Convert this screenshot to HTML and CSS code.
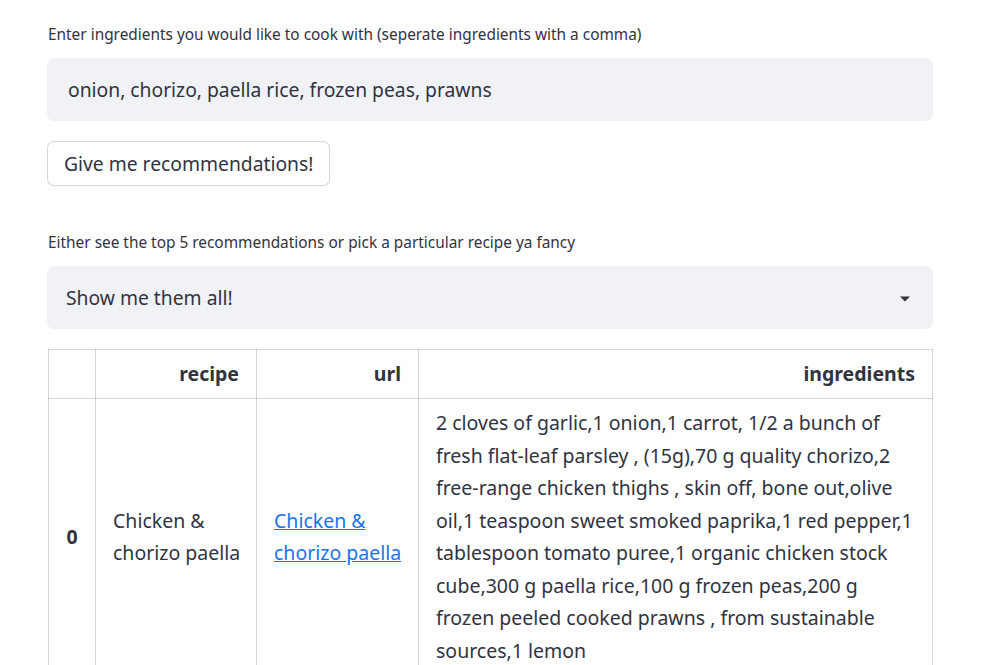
FILE: index.html
```html
<!DOCTYPE html>
<html>
<head>
<meta charset="utf-8">
<link rel="stylesheet" href="styles.css">
</head>
<body>
<main class="app">
  <label class="label">Enter ingredients you would like to cook with (seperate ingredients with a comma)</label>
  <div class="input">onion, chorizo, paella rice, frozen peas, prawns</div>
  <button class="btn">Give me recommendations!</button>
  <label class="label label2">Either see the top 5 recommendations or pick a particular recipe ya fancy</label>
  <div class="select">
    <span>Show me them all!</span>
    <svg class="caret" width="12" height="8" viewBox="0 0 12 8"><path d="M1 1.5h10L6 6.5z" fill="#31333f"/></svg>
  </div>
  <table class="df">
    <colgroup>
      <col class="c0"><col class="c1"><col class="c2"><col class="c3">
    </colgroup>
    <thead>
      <tr><th></th><th>recipe</th><th>url</th><th>ingredients</th></tr>
    </thead>
    <tbody>
      <tr>
        <th class="idx">0</th>
        <td class="nw">Chicken &amp;<br>chorizo paella</td>
        <td class="nw"><a href="#">Chicken &amp;<br>chorizo paella</a></td>
        <td class="nw">2 cloves of garlic,1 onion,1 carrot, 1/2 a bunch of<br>fresh flat-leaf parsley , (15g),70 g quality chorizo,2<br>free-range chicken thighs , skin off, bone out,olive<br>oil,1 teaspoon sweet smoked paprika,1 red pepper,1<br>tablespoon tomato puree,1 organic chicken stock<br>cube,300 g paella rice,100 g frozen peas,200 g<br>frozen peeled cooked prawns , from sustainable<br>sources,1 lemon</td>
      </tr>
    </tbody>
  </table>
</main>
</body>
</html>
```
FILE: styles.css
```css
* { box-sizing: border-box; }
html, body { margin: 0; padding: 0; background: #fff; }
body {
  font-family: "Noto Sans", "Open Sans", sans-serif;
  color: #31333f;
  overflow: hidden;
}
.app {
  width: 886px;
  margin-left: 47px;
  padding-top: 25px;
  display: flex;
  flex-direction: column;
  align-items: flex-start;
}
.label {
  font-size: 15.4px;
  line-height: 20px;
  margin-left: 1px;
  margin-bottom: 13px;
}
.label2 { margin-top: 47px; margin-bottom: 13px; }
.input {
  width: 100%;
  height: 63px;
  background: #f0f2f6;
  border-radius: 7px;
  font-size: 19.3px;
  line-height: 63px;
  padding-left: 21px;
}
.btn {
  margin-top: 20px;
  height: 45px;
  padding: 0 16px;
  width: 283px;
  background: #fff;
  border: 1px solid rgba(49, 51, 63, 0.2);
  border-radius: 7px;
  font-family: inherit;
  font-size: 19.3px;
  color: #31333f;
  text-align: left;
  white-space: nowrap;
}
.select {
  width: 100%;
  height: 63px;
  background: #f0f2f6;
  border-radius: 7px;
  font-size: 19.3px;
  padding: 0 22px 0 19px;
  display: flex;
  align-items: center;
  justify-content: space-between;
}
.caret { margin-top: 2px; }
.df {
  margin-top: 20px;
  margin-left: 1px;
  width: 885px;
  border-collapse: collapse;
  table-layout: fixed;
  font-size: 19.5px;
  line-height: 32.5px;
}
.c0 { width: 47px; }
.c1 { width: 161px; }
.c2 { width: 162px; }
.df th, .df td {
  border: 1px solid rgba(49, 51, 63, 0.2);
  padding: 8px 17px;
  vertical-align: middle;
}
.df thead th {
  text-align: right;
  font-weight: 700;
  height: 49px;
  padding-top: 0;
  padding-bottom: 0;
}
.df td { text-align: left; }
.df .idx { text-align: center; font-weight: 700; padding: 0; }
.df a { color: #1a73e8; text-decoration: underline; }
.nw { white-space: nowrap; }
```
